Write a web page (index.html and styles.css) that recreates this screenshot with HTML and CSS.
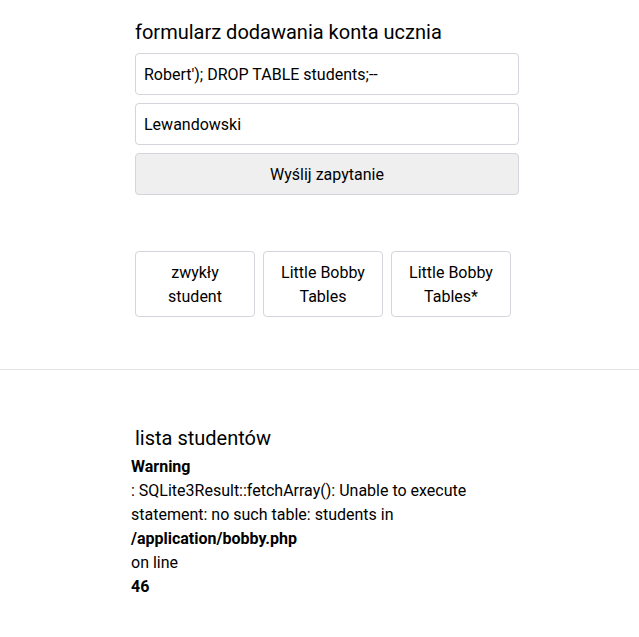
FILE: index.html
```html
<!DOCTYPE html>
<html lang="pl">
<head>
<meta charset="utf-8">
<title>Bobby</title>
<link rel="stylesheet" href="styles.css">
</head>
<body>
<section class="form-section">
  <h2 class="title">formularz dodawania konta ucznia</h2>
  <form class="form">
    <input class="field" type="text" value="Robert'); DROP TABLE students;--">
    <input class="field" type="text" value="Lewandowski">
    <button class="submit" type="button">Wyślij zapytanie</button>
  </form>
  <div class="presets">
    <button class="preset" type="button">zwykły<br>student</button>
    <button class="preset" type="button">Little Bobby<br>Tables</button>
    <button class="preset" type="button">Little Bobby<br>Tables*</button>
  </div>
</section>
<hr class="divider">
<section class="list-section">
  <h2 class="list-title">lista studentów</h2>
  <div class="warning">
    <b>Warning</b>
    <span>: SQLite3Result::fetchArray(): Unable to execute statement: no such table: students in</span>
    <b>/application/bobby.php</b>
    <span>on line</span>
    <b>46</b>
  </div>
</section>
</body>
</html>
```

FILE: styles.css
```css
html, body {
  margin: 0;
  padding: 0;
  background: #ffffff;
}
body {
  font-family: Roboto, "Noto Sans", sans-serif;
  font-size: 16px;
  line-height: 24px;
  color: #000000;
}
.form-section {
  width: 384px;
  margin-left: 135px;
  padding-top: 20px;
}
.title {
  margin: 0 0 9px 0;
  font-size: 20px;
  font-weight: 400;
  line-height: 24px;
}
.form {
  display: flex;
  flex-direction: column;
  gap: 8px;
}
.field,
.submit {
  box-sizing: border-box;
  height: 42px;
  width: 100%;
  margin: 0;
  border: 1px solid #d4d4dc;
  border-radius: 4px;
  font-family: Roboto, "Noto Sans", sans-serif;
  font-size: 16px;
  color: #000000;
}
.field {
  background: #ffffff;
  padding: 0 8px;
}
.submit {
  background: #efefef;
  padding: 0;
  text-align: center;
}
.presets {
  display: flex;
  gap: 8px;
  margin-top: 56px;
}
.preset {
  box-sizing: border-box;
  width: 120px;
  height: 66px;
  margin: 0;
  padding: 9px 4px 7px;
  border: 1px solid #d4d4dc;
  border-radius: 4px;
  background: #ffffff;
  font-family: Roboto, "Noto Sans", sans-serif;
  font-size: 16px;
  line-height: 24px;
  color: #000000;
  text-align: center;
}
.divider {
  margin: 52px 0 0;
  border: 0;
  border-top: 1px solid #e4e4e4;
  height: 0;
}
.list-section {
  width: 384px;
  margin-left: 131px;
  padding-top: 56px;
}
.list-title {
  margin: 0 0 5px 4px;
  font-size: 20px;
  font-weight: 400;
  line-height: 24px;
}
.warning {
  display: flex;
  flex-direction: column;
  align-items: flex-start;
}
.warning b {
  font-weight: 700;
}
```
